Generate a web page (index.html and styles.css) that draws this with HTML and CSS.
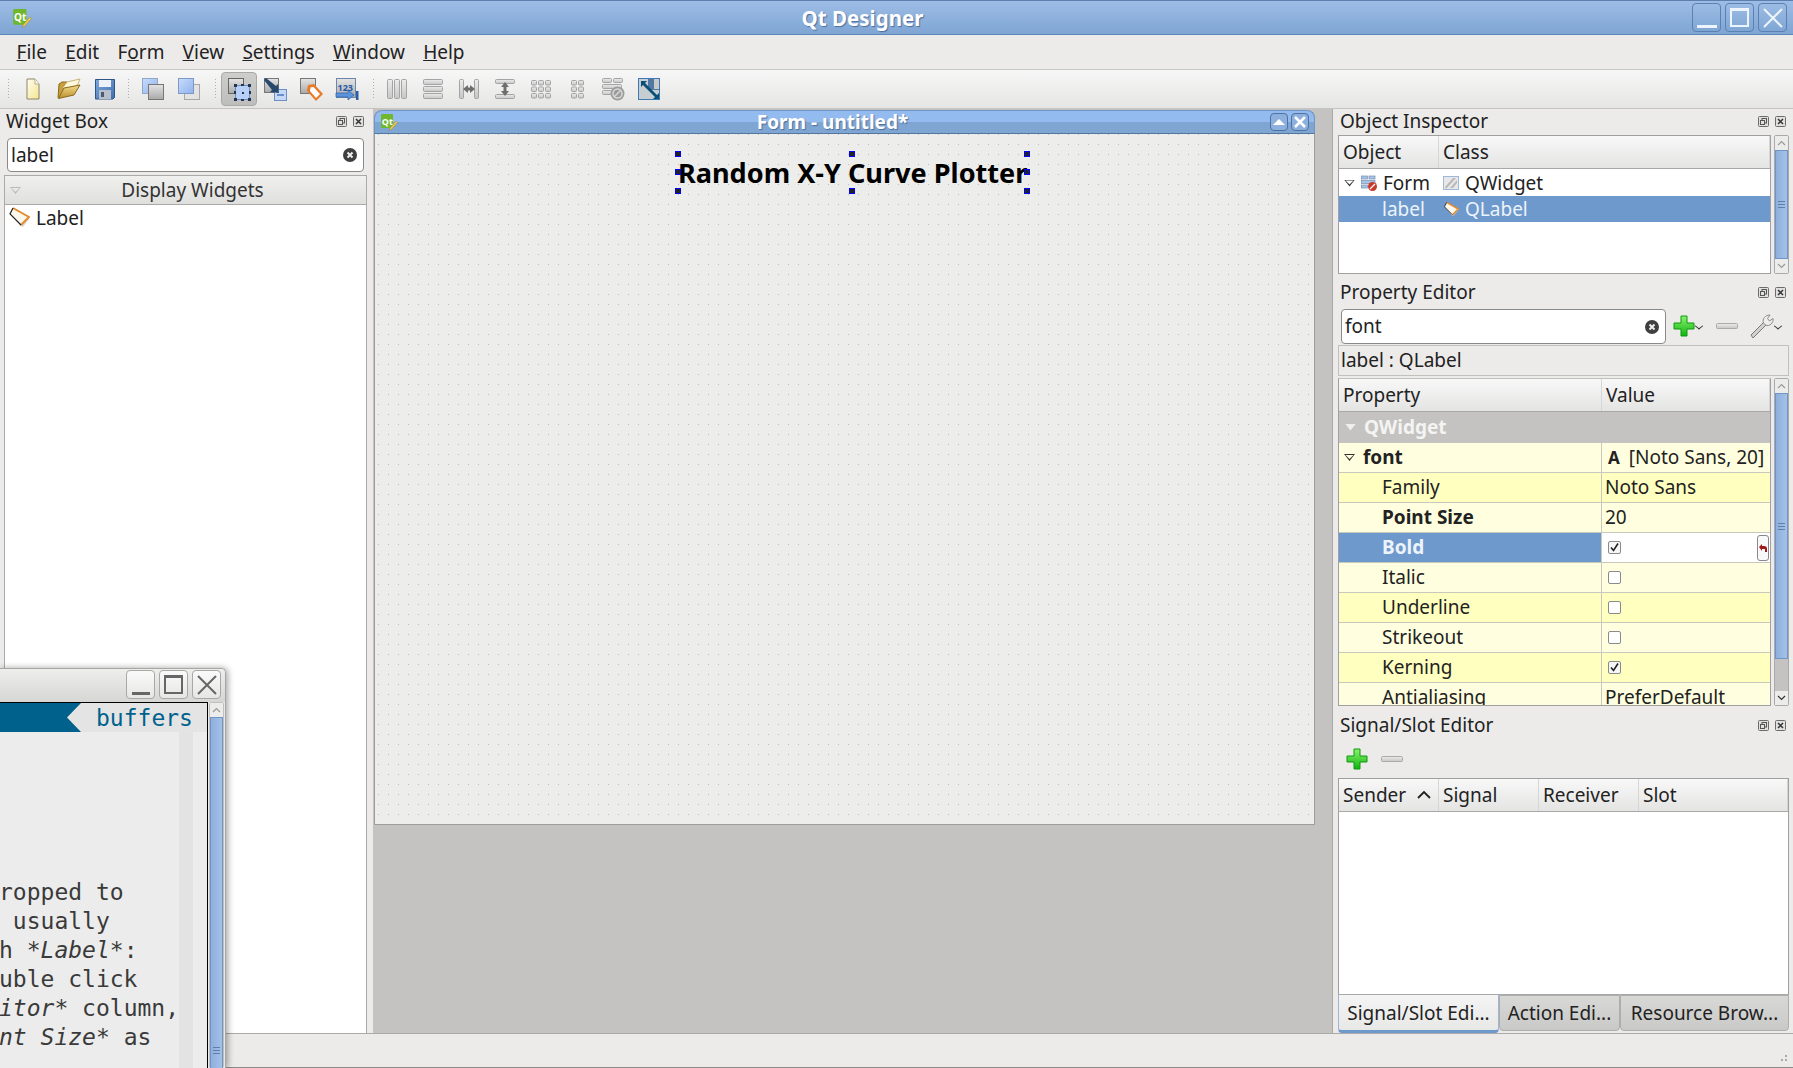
FILE: index.html
```html
<!DOCTYPE html>
<html lang="en">
<head>
<meta charset="UTF-8">
<title>Qt Designer</title>
<link rel="stylesheet" href="styles.css">
</head>
<body>

<!-- shared icons -->
<svg class="icon-defs" width="0" height="0">
  <defs>
    <linearGradient id="gGrey" x1="0" y1="0" x2="0" y2="1"><stop offset="0" stop-color="#e4e4e4"/><stop offset="1" stop-color="#a9a9a9"/></linearGradient>
    <linearGradient id="gBlue" x1="0" y1="0" x2="1" y2="1"><stop offset="0" stop-color="#c9dcfb"/><stop offset="1" stop-color="#8fb2ee"/></linearGradient>
    <linearGradient id="gBar" x1="0" y1="0" x2="0" y2="1"><stop offset="0" stop-color="#ececec"/><stop offset="1" stop-color="#c6c6c6"/></linearGradient>
    <linearGradient id="gFolder" x1="0" y1="0" x2="0" y2="1"><stop offset="0" stop-color="#f3dc8c"/><stop offset="1" stop-color="#bd8f2c"/></linearGradient>
    <linearGradient id="gPage" x1="0" y1="0" x2="1" y2="1"><stop offset="0" stop-color="#fffdf0"/><stop offset="1" stop-color="#f4e58e"/></linearGradient>
    <linearGradient id="gGreen" x1="0" y1="0" x2="0" y2="1"><stop offset="0" stop-color="#8af26e"/><stop offset="1" stop-color="#0fb50f"/></linearGradient>
    <linearGradient id="gFloppy" x1="0" y1="0" x2="1" y2="1"><stop offset="0" stop-color="#7ea8dc"/><stop offset="1" stop-color="#3f6fae"/></linearGradient>

    <symbol id="i-qt" viewBox="0 0 18 18">
      <rect x="1" y="1" width="12" height="14" rx="1" fill="#6fb82e"/>
      <text x="1.800" y="12" font-family="Noto Sans" font-weight="700" font-size="9" fill="#fff">Qt</text>
      <path d="M10 15l6-7 1.500 1.500-6 7-2.500 .8z" fill="#ecc94a" stroke="#8a7a40" stroke-width=".4"/>
    </symbol>
    <symbol id="i-new" viewBox="0 0 24 24">
      <path d="M6 2h8l4 5v15H6z" fill="url(#gPage)" stroke="#8d8668"/>
      <path d="M14 2v5h4" fill="#fff" stroke="#b5ad88"/>
    </symbol>
    <symbol id="i-open" viewBox="0 0 24 24">
      <path d="M1 21L2 7l3-2h5l2 2h6v4" fill="#c99f3d" stroke="#8a6a20"/>
      <path d="M5 12l5-7 13-3-3 7z" fill="#fff8d8" stroke="#b09a58" stroke-width=".7"/>
      <path d="M1.500 21.500L7 11l16-3-6 10z" fill="url(#gFolder)" stroke="#8a6a20"/>
    </symbol>
    <symbol id="i-save" viewBox="0 0 24 24">
      <path d="M2.500 2.500h19v18l-1.500 1.500h-17.500z" fill="url(#gFloppy)" stroke="#2f5488"/>
      <rect x="6" y="3" width="12" height="7" fill="#eef2f8"/>
      <rect x="6" y="13" width="12" height="9" fill="#b6bfcb"/>
      <rect x="8" y="15" width="3" height="5" fill="#4b5a6e"/>
    </symbol>
    <symbol id="i-front" viewBox="0 0 24 24">
      <rect x="1.500" y="1.500" width="15" height="15" fill="url(#gBlue)" stroke="#8fa8c8"/>
      <rect x="7.500" y="7.500" width="15" height="15" fill="url(#gGrey)" stroke="#777"/>
    </symbol>
    <symbol id="i-back" viewBox="0 0 24 24">
      <rect x="7.500" y="7.500" width="15" height="15" fill="#e3e3e3" stroke="#a8a8a8"/>
      <rect x="1.500" y="1.500" width="15" height="15" fill="url(#gBlue)" stroke="#7c9ac4"/>
    </symbol>
    <symbol id="i-widgets" viewBox="0 0 26 26">
      <rect x="2.500" y="2.500" width="15" height="15" fill="url(#gGrey)" stroke="#666"/>
      <rect x="9.500" y="9.500" width="14" height="14" fill="#b8d0f8" stroke="#6b8fc4"/>
      <path d="M8 8h3v3H8zM22 8h3v3h-3zM8 22h3v3H8zM22 22h3v3h-3zM15 8h3v2h-3zM16 16h2v2h-2zM23 15h2v3h-2zM8 15h2v3H8zM15 23h3v2h-3z" fill="#24364f"/>
    </symbol>
    <symbol id="i-signals" viewBox="0 0 24 24">
      <rect x="1.500" y="1.500" width="14" height="14" fill="url(#gGrey)" stroke="#777"/>
      <rect x="11.500" y="12.500" width="12" height="11" fill="#c5d8f8" stroke="#6b8fc4"/>
      <rect x="14" y="17" width="7" height="2" fill="#6b8fc4"/>
      <path d="M1 3l2-2 10 8 2-2 1 9-9-1 2-2z" fill="#28486e"/>
    </symbol>
    <symbol id="i-tagsq" viewBox="0 0 24 24">
      <rect x="1.500" y="1.500" width="15" height="15" fill="url(#gGrey)" stroke="#777"/>
      <path d="M9 8l6-1 9 10-7 7-9-10z" fill="#e87a28"/>
      <path d="M11.500 10.500l3-.5 6.500 7-4 4-6-7z" fill="#fff"/>
    </symbol>
    <symbol id="i-taborder" viewBox="0 0 24 24">
      <rect x="1.500" y="1.500" width="19" height="19" fill="url(#gGrey)" stroke="#6d87aa"/>
      <text x="2.500" y="14" font-family="Noto Sans" font-size="9" font-weight="700" fill="#2456a8">123</text>
      <path d="M1 16h12v-3l6 5-6 5v-3H1z" fill="#5b94dc" stroke="#2c5fa8" stroke-width=".7"/>
      <rect x="21" y="14" width="2.500" height="9" fill="#2c5fa8"/>
    </symbol>
    <symbol id="i-hbox" viewBox="0 0 24 24">
      <g fill="url(#gBar)" stroke="#a4a4a4"><rect x="2.500" y="2.500" width="5" height="19" rx="1"/><rect x="9.500" y="2.500" width="5" height="19" rx="1"/><rect x="16.500" y="2.500" width="5" height="19" rx="1"/></g>
    </symbol>
    <symbol id="i-vbox" viewBox="0 0 24 24">
      <g fill="url(#gBar)" stroke="#a4a4a4"><rect x="2.500" y="2.500" width="19" height="5" rx="1"/><rect x="2.500" y="9.500" width="19" height="5" rx="1"/><rect x="2.500" y="16.500" width="19" height="5" rx="1"/></g>
    </symbol>
    <symbol id="i-hsplit" viewBox="0 0 24 24">
      <g fill="url(#gBar)" stroke="#a4a4a4"><rect x="2.500" y="2.500" width="4" height="19" rx="1"/><rect x="17.500" y="2.500" width="4" height="19" rx="1"/></g>
      <path d="M6 12l5-4v2.500h2V8l5 4-5 4v-2.500h-2V16z" fill="#6e6e6e"/>
    </symbol>
    <symbol id="i-vsplit" viewBox="0 0 24 24">
      <g fill="url(#gBar)" stroke="#a4a4a4"><rect x="2.500" y="2.500" width="19" height="4" rx="1"/><rect x="2.500" y="17.500" width="19" height="4" rx="1"/></g>
      <path d="M12 5l4 5h-2.500v4H16l-4 5-4-5h2.500v-4H8z" fill="#6e6e6e"/>
    </symbol>
    <symbol id="i-grid" viewBox="0 0 24 24">
      <g fill="url(#gBar)" stroke="#a4a4a4">
        <rect x="2.500" y="3.500" width="5" height="4.500" rx="1"/><rect x="9.500" y="3.500" width="5" height="4.500" rx="1"/><rect x="16.500" y="3.500" width="5" height="4.500" rx="1"/>
        <rect x="2.500" y="10" width="5" height="4.500" rx="1"/><rect x="9.500" y="10" width="5" height="4.500" rx="1"/><rect x="16.500" y="10" width="5" height="4.500" rx="1"/>
        <rect x="2.500" y="16.500" width="5" height="4.500" rx="1"/><rect x="9.500" y="16.500" width="5" height="4.500" rx="1"/><rect x="16.500" y="16.500" width="5" height="4.500" rx="1"/>
      </g>
    </symbol>
    <symbol id="i-formgrid" viewBox="0 0 24 24">
      <g fill="url(#gBar)" stroke="#a4a4a4">
        <rect x="6.500" y="3.500" width="5" height="4.500" rx="1"/><rect x="13.500" y="3.500" width="5" height="4.500" rx="1"/>
        <rect x="6.500" y="10" width="5" height="4.500" rx="1"/><rect x="13.500" y="10" width="5" height="4.500" rx="1"/>
        <rect x="6.500" y="16.500" width="5" height="4.500" rx="1"/><rect x="13.500" y="16.500" width="5" height="4.500" rx="1"/>
      </g>
    </symbol>
    <symbol id="i-break" viewBox="0 0 24 24">
      <g fill="url(#gBar)" stroke="#a4a4a4">
        <rect x="1.500" y="1.500" width="9" height="4" rx="1"/><rect x="12.500" y="1.500" width="9" height="4" rx="1"/>
        <rect x="1.500" y="7.500" width="19" height="4" rx="1"/><rect x="1.500" y="13.500" width="9" height="4" rx="1"/>
      </g>
      <circle cx="16.500" cy="16.500" r="7" fill="#9c9c9c"/>
      <circle cx="16.500" cy="16.500" r="4.500" fill="none" stroke="#d8d8d8" stroke-width="1.500"/>
      <path d="M13.500 19.500l6-6" stroke="#d8d8d8" stroke-width="1.500"/>
    </symbol>
    <symbol id="i-adjust" viewBox="0 0 24 24">
      <rect x="1.500" y="1.500" width="21" height="21" fill="#c6ced2" stroke="#3e78b6"/>
      <path d="M2 2h15v9h6v2H11V2z" fill="#3d6a9e" opacity=".85"/>
      <rect x="17" y="2" width="5" height="10" fill="#c9c9c9"/>
      <path d="M4 4h6L8 6l12 12 2-2v6h-6l2-2L6 8 4 10z" fill="#0a4f78"/>
    </symbol>
    <symbol id="i-tag" viewBox="0 0 22 22">
      <path d="M4 6l8 14 3 1 6-8" fill="#bdbdbd" opacity=".6"/>
      <path d="M5 2l17 9-9 9L2 8z" fill="#fbf7ec"/>
      <path d="M5 2l16 9-8 8" fill="none" stroke="#e48b2c" stroke-width="2"/>
      <path d="M13 19L2 8l3-6" fill="none" stroke="#222" stroke-width="1.200"/>
    </symbol>
    <symbol id="i-clear" viewBox="0 0 14 14">
      <circle cx="7" cy="7" r="7" fill="#3f3f3f"/>
      <path d="M4.500 4.500l5 5M9.500 4.500l-5 5" stroke="#eee" stroke-width="2"/>
    </symbol>
    <symbol id="i-float" viewBox="0 0 11 11">
      <rect x=".5" y=".5" width="10" height="10" rx="1" fill="#e0e0e0" stroke="#6c6c6c"/>
      <rect x="4" y="2.500" width="4.500" height="4.500" fill="none" stroke="#555"/>
      <rect x="2.500" y="4.500" width="4" height="4" fill="#e0e0e0" stroke="#555"/>
    </symbol>
    <symbol id="i-close" viewBox="0 0 11 11">
      <rect x=".5" y=".5" width="10" height="10" rx="1" fill="#e0e0e0" stroke="#6c6c6c"/>
      <path d="M3 3l5 5M8 3L3 8" stroke="#333" stroke-width="1.500"/>
    </symbol>
    <symbol id="i-plus" viewBox="0 0 22 22">
      <path d="M8 1h6v7h7v6h-7v7H8v-7H1V8h7z" fill="url(#gGreen)" stroke="#0c9a0c"/>
    </symbol>
    <symbol id="i-minus" viewBox="0 0 22 6">
      <rect x=".5" y=".5" width="21" height="5" rx="1" fill="url(#gBar)" stroke="#aaa"/>
    </symbol>
    <symbol id="i-wrench" viewBox="0 0 24 24">
      <path d="M1 21L14 8l2.500 2.500L3 24z" fill="#d0d0d0" stroke="#7a7a7a"/>
      <path d="M13.500 9C12 5 15 1 20 1l-2.500 3.500 2 2.500L23 4.500C24 9 19 13 15.500 11z" fill="#ededed" stroke="#8a8a8a"/>
    </symbol>
    <symbol id="i-formtree" viewBox="0 0 16 16">
      <g fill="#a9c4e4" stroke="#6f8db3" stroke-width=".7"><rect x=".5" y="1" width="6" height="3"/><rect x="8" y="1" width="6" height="3"/><rect x=".5" y="5.500" width="13.500" height="3"/><rect x=".5" y="10" width="6" height="3"/></g>
      <circle cx="11.500" cy="11.500" r="4.500" fill="#c8392e"/>
      <path d="M9 14l5-5" stroke="#fff" stroke-width="1.200"/>
    </symbol>
    <symbol id="i-qwidget" viewBox="0 0 16 14">
      <rect x=".5" y=".5" width="15" height="13" fill="#e8e8e8" stroke="#9db8da"/>
      <path d="M2 11l8-9h3L3 13M7 12l7-8v3l-4 5" fill="#b9b9b9"/>
    </symbol>
    <symbol id="i-check" viewBox="0 0 13 13">
      <rect x=".5" y=".5" width="12" height="12" rx="1.500" fill="#f6f6f6" stroke="#8a8a8a"/>
      <path d="M3 6.500l2.500 3L10 2.500" fill="none" stroke="#222" stroke-width="1.600"/>
    </symbol>
    <symbol id="i-box" viewBox="0 0 13 13">
      <rect x=".5" y=".5" width="12" height="12" rx="1.500" fill="#fff" stroke="#8a8a8a"/>
    </symbol>
  </defs>
</svg>

<div class="app">
  <header class="titlebar">
    <svg class="title-logo"><use href="#i-qt"/></svg>
    <span class="title-text">Qt Designer</span>
    <div class="win-btns">
      <span class="win-btn"><i class="glyph-min"></i></span>
      <span class="win-btn"><i class="glyph-max"></i></span>
      <span class="win-btn"><svg width="24" height="24"><path d="M3 3l18 18M21 3L3 21"/></svg></span>
    </div>
  </header>

  <nav class="menubar">
    <span class="menu-item"><u>F</u>ile</span>
    <span class="menu-item"><u>E</u>dit</span>
    <span class="menu-item">F<u>o</u>rm</span>
    <span class="menu-item"><u>V</u>iew</span>
    <span class="menu-item"><u>S</u>ettings</span>
    <span class="menu-item"><u>W</u>indow</span>
    <span class="menu-item"><u>H</u>elp</span>
  </nav>

  <div class="toolbar">
    <span class="tb-handle"></span>
    <span class="tb-btn"><svg><use href="#i-new"/></svg></span>
    <span class="tb-btn"><svg><use href="#i-open"/></svg></span>
    <span class="tb-btn"><svg><use href="#i-save"/></svg></span>
    <span class="tb-sep"></span>
    <span class="tb-btn"><svg><use href="#i-front"/></svg></span>
    <span class="tb-btn"><svg><use href="#i-back"/></svg></span>
    <span class="tb-sep wide"></span>
    <span class="tb-btn active"><svg><use href="#i-widgets"/></svg></span>
    <span class="tb-btn"><svg><use href="#i-signals"/></svg></span>
    <span class="tb-btn"><svg><use href="#i-tagsq"/></svg></span>
    <span class="tb-btn"><svg><use href="#i-taborder"/></svg></span>
    <span class="tb-sep wide"></span>
    <span class="tb-btn"><svg><use href="#i-hbox"/></svg></span>
    <span class="tb-btn"><svg><use href="#i-vbox"/></svg></span>
    <span class="tb-btn"><svg><use href="#i-hsplit"/></svg></span>
    <span class="tb-btn"><svg><use href="#i-vsplit"/></svg></span>
    <span class="tb-btn"><svg><use href="#i-grid"/></svg></span>
    <span class="tb-btn"><svg><use href="#i-formgrid"/></svg></span>
    <span class="tb-btn"><svg><use href="#i-break"/></svg></span>
    <span class="tb-btn"><svg><use href="#i-adjust"/></svg></span>
  </div>

  <main class="workspace">
    <aside class="left-dock">
      <div class="dock-title">
        <span>Widget Box</span>
        <span class="dock-btns"><svg><use href="#i-float"/></svg><svg><use href="#i-close"/></svg></span>
      </div>
      <div class="filter filter-left">
        <span>label</span>
        <svg class="clear"><use href="#i-clear"/></svg>
      </div>
      <div class="category"><i class="tri tri-light"></i><span>Display Widgets</span></div>
      <div class="box-list">
        <div class="box-item"><svg><use href="#i-tag"/></svg><span>Label</span></div>
      </div>
    </aside>

    <section class="mdi">
      <div class="form-win">
        <div class="form-title">
          <svg class="form-logo"><use href="#i-qt"/></svg>
          <span class="form-name">Form - untitled*</span>
          <span class="form-btn"><svg width="12" height="8"><path d="M0 7l6-6 6 6z" fill="#fff"/></svg></span>
          <span class="form-btn"><svg width="12" height="12"><path d="M1 1l10 10M11 1L1 11" stroke="#fff" stroke-width="2.500"/></svg></span>
        </div>
        <div class="form-body">
          <div class="form-label">Random X-Y Curve Plotter
            <i class="handle h-tl"></i><i class="handle h-tc"></i><i class="handle h-tr"></i>
            <i class="handle h-ml"></i><i class="handle h-mr"></i>
            <i class="handle h-bl"></i><i class="handle h-bc"></i><i class="handle h-br"></i>
          </div>
        </div>
      </div>
    </section>

    <aside class="right-dock">
      <div class="dock-title">
        <span>Object Inspector</span>
        <span class="dock-btns"><svg><use href="#i-float"/></svg><svg><use href="#i-close"/></svg></span>
      </div>
      <div class="inspector-row">
        <div class="tree">
          <div class="head tree-cols">
            <span class="head-cell">Object</span>
            <span class="head-cell">Class</span>
          </div>
          <div class="tree-cols tree-row">
            <span class="cell-obj"><i class="tri"></i><svg class="ico16"><use href="#i-formtree"/></svg>Form</span>
            <span class="cell-cls"><svg class="ico16"><use href="#i-qwidget"/></svg>QWidget</span>
          </div>
          <div class="tree-cols tree-row selected">
            <span class="cell-obj indent">label</span>
            <span class="cell-cls"><svg class="ico16"><use href="#i-tag"/></svg>QLabel</span>
          </div>
        </div>
        <div class="scrollbar sb-obj">
          <span class="sb-arrow"><svg width="9" height="6"><path d="M1 5l3.500-3.500L8 5"/></svg></span>
          <span class="sb-thumb"><i></i></span>
          <span class="sb-arrow"><svg width="9" height="6"><path d="M1 1l3.500 3.500L8 1"/></svg></span>
        </div>
      </div>

      <div class="dock-title title-gap">
        <span>Property Editor</span>
        <span class="dock-btns"><svg><use href="#i-float"/></svg><svg><use href="#i-close"/></svg></span>
      </div>
      <div class="prop-tools">
        <div class="filter filter-prop">
          <span>font</span>
          <svg class="clear"><use href="#i-clear"/></svg>
        </div>
        <svg class="tool-plus"><use href="#i-plus"/></svg><b class="chev"></b>
        <svg class="tool-minus"><use href="#i-minus"/></svg>
        <svg class="tool-wrench"><use href="#i-wrench"/></svg><b class="chev"></b>
      </div>
      <div class="class-name">label : QLabel</div>
      <div class="inspector-row prop-row">
        <div class="props">
          <div class="head prop-cols">
            <span class="head-cell">Property</span>
            <span class="head-cell">Value</span>
          </div>
          <div class="prop-group"><i class="tri tri-white"></i>QWidget</div>
          <div class="prop prop-cols light"><span class="pname strong-top"><i class="tri"></i><b>font</b></span><span class="pval"><b class="font-a">A</b>[Noto Sans, 20]</span></div>
          <div class="prop prop-cols dark"><span class="pname">Family</span><span class="pval">Noto Sans</span></div>
          <div class="prop prop-cols light"><span class="pname"><b>Point Size</b></span><span class="pval">20</span></div>
          <div class="prop prop-cols current"><span class="pname"><b>Bold</b></span><span class="pval editor"><svg class="ico13"><use href="#i-check"/></svg><span class="reset"><svg width="8" height="8"><path d="M0 3l3-3v2h2c2 0 3 1 3 3v3H6V5H3v2z" fill="#a01818"/></svg></span></span></div>
          <div class="prop prop-cols light"><span class="pname">Italic</span><span class="pval"><svg class="ico13"><use href="#i-box"/></svg></span></div>
          <div class="prop prop-cols dark"><span class="pname">Underline</span><span class="pval"><svg class="ico13"><use href="#i-box"/></svg></span></div>
          <div class="prop prop-cols light"><span class="pname">Strikeout</span><span class="pval"><svg class="ico13"><use href="#i-box"/></svg></span></div>
          <div class="prop prop-cols dark"><span class="pname">Kerning</span><span class="pval"><svg class="ico13"><use href="#i-check"/></svg></span></div>
          <div class="prop prop-cols light"><span class="pname">Antialiasing</span><span class="pval">PreferDefault</span></div>
        </div>
        <div class="scrollbar sb-prop">
          <span class="sb-arrow"><svg width="9" height="6"><path d="M1 5l3.500-3.500L8 5"/></svg></span>
          <span class="sb-thumb"><i></i></span>
          <span class="sb-track"></span>
          <span class="sb-arrow sb-dark"><svg width="9" height="6"><path d="M1 1l3.500 3.500L8 1"/></svg></span>
        </div>
      </div>

      <div class="dock-title signal-title">
        <span>Signal/Slot Editor</span>
        <span class="dock-btns"><svg><use href="#i-float"/></svg><svg><use href="#i-close"/></svg></span>
      </div>
      <div class="signal-tools">
        <svg class="tool-plus"><use href="#i-plus"/></svg>
        <svg class="tool-minus"><use href="#i-minus"/></svg>
      </div>
      <div class="signals">
        <div class="head signal-cols">
          <span class="head-cell sender">Sender<svg width="16" height="10"><path d="M2 8l6-6 6 6" fill="none" stroke="#222" stroke-width="1.800"/></svg></span>
          <span class="head-cell">Signal</span>
          <span class="head-cell">Receiver</span>
          <span class="head-cell">Slot</span>
        </div>
      </div>
      <div class="tabs">
        <span class="tab active">Signal/Slot Edi...</span>
        <span class="tab tab-action">Action Edi...</span>
        <span class="tab tab-res">Resource Brow...</span>
      </div>
    </aside>
  </main>

  <footer class="statusbar"><i class="grip"></i></footer>
</div>

<!-- terminal window lying over the designer -->
<div class="term">
  <div class="term-title">
    <span class="term-btn"><i class="glyph-min dark"></i></span>
    <span class="term-btn"><i class="glyph-max dark"></i></span>
    <span class="term-btn"><svg width="22" height="22"><path d="M2 2l18 18M20 2L2 20"/></svg></span>
  </div>
  <div class="term-body">
    <div class="term-main">
      <div class="term-tabline"><span class="term-tab"></span><span class="term-buffers">buffers</span></div>
      <div class="term-text">
        <div class="term-line">ropped to</div>
        <div class="term-line"> usually</div>
        <div class="term-line">h <em>*Label*</em>:</div>
        <div class="term-line">uble click</div>
        <div class="term-line"><em>itor*</em> column,</div>
        <div class="term-line"><em>nt Size*</em> as</div>
      </div>
    </div>
    <div class="scrollbar sb-term">
      <span class="sb-arrow"><svg width="9" height="6"><path d="M1 5l3.500-3.500L8 5"/></svg></span>
      <span class="sb-thumb"><i></i></span>
    </div>
  </div>
</div>

</body>
</html>
```

FILE: styles.css
```css
* {
    box-sizing: border-box;
}
html, body {
    margin: 0;
    height: 100%;
    overflow: hidden;
}
body {
    position: relative;
    background-color: #ecebea;
    font-family: "Noto Sans", sans-serif;
    font-size: 19px;
    color: #222;
}
.icon-defs {
    position: absolute;
}
.app {
    display: flex;
    flex-direction: column;
    height: 1068px;
}

/* title bar */
.titlebar {
    position: relative;
    flex: 0 0 35px;
    display: flex;
    align-items: center;
    justify-content: center;
    padding-right: 68px;
    background: linear-gradient(#9dbde6, #7fa5d3);
    border-top: 1px solid #5d7fae;
    border-bottom: 1px solid #5f86b8;
}
.title-logo {
    position: absolute;
    left: 12px;
    top: 7px;
    width: 20px;
    height: 20px;
}
.title-text {
    font-weight: 700;
    font-size: 20.5px;
    color: #fff;
    text-shadow: 1px 1px 1px #4d6f9c;
}
.win-btns {
    position: absolute;
    right: 6px;
    top: 2px;
    display: flex;
    gap: 4px;
}
.win-btn {
    width: 29px;
    height: 29px;
    display: flex;
    align-items: center;
    justify-content: center;
    border: 1px solid #5b80b2;
    border-radius: 4px;
    background: linear-gradient(#9cbce4, #7fa6d4);
}
.win-btn svg path {
    stroke: #eef4fb;
    stroke-width: 2;
}
.glyph-min {
    display: block;
    width: 20px;
    height: 3px;
    margin-top: 18px;
    background-color: #eef4fb;
}
.glyph-max {
    display: block;
    width: 19px;
    height: 19px;
    border: 2px solid #eef4fb;
    border-top-width: 3px;
}
.glyph-min.dark {
    width: 18px;
    background-color: #666;
}
.glyph-max.dark {
    border-color: #666;
}

/* menu */
.menubar {
    flex: 0 0 34px;
    display: flex;
    align-items: center;
    padding: 0 0 1px 7.5px;
    background-color: #ecebea;
}
.menu-item {
    padding: 0 9.1px;
    color: #222;
}

/* toolbar */
.toolbar {
    flex: 0 0 40px;
    display: flex;
    align-items: center;
    background: linear-gradient(#f7f7f7, #e5e5e4);
    border-top: 1px solid #c8c8c6;
    border-bottom: 1px solid #c4c4c2;
}
.tb-handle {
    width: 15px;
    height: 20px;
    background: radial-gradient(circle at .5px .5px, #b0b0ae .5px, transparent .6px) 8px 0 / 2px 3px repeat-y;
}
.tb-btn {
    width: 36px;
    height: 34px;
    display: flex;
    align-items: center;
    justify-content: center;
    border: 1px solid transparent;
    border-radius: 4px;
}
.tb-btn svg {
    width: 24px;
    height: 24px;
}
.tb-btn.active {
    background: linear-gradient(#cdcdcb, #bdbdbb);
    border-color: #a9a9a7;
}
.tb-btn.active svg {
    width: 26px;
    height: 26px;
}
.tb-sep {
    width: 12px;
    height: 20px;
    background: radial-gradient(circle at .5px .5px, #b0b0ae .5px, transparent .6px) 5px 0 / 2px 3px repeat-y;
}
.tb-sep.wide {
    width: 14px;
    background-position: 8px 0;
}

/* docks */
.workspace {
    flex: 1;
    display: flex;
    min-height: 0;
}
.left-dock {
    flex: 0 0 373px;
    display: flex;
    flex-direction: column;
    padding: 0 6px 0 4px;
}
.dock-title {
    flex: 0 0 26px;
    display: flex;
    align-items: center;
    justify-content: space-between;
    padding: 0 0 2px 2px;
    line-height: 24px;
    color: #222;
}
.dock-btns {
    display: flex;
    gap: 6px;
    padding-right: 3px;
}
.dock-btns svg {
    width: 11px;
    height: 11px;
}
.filter {
    display: flex;
    align-items: center;
    justify-content: space-between;
    background-color: #fff;
    border: 1px solid #8a8a8a;
    border-radius: 4px;
    padding: 0 6px 1px 3px;
    color: #222;
}
.clear {
    width: 14px;
    height: 14px;
    margin-top: 1px;
}
.filter-left {
    flex: 0 0 34px;
    margin: 3px 3px 3px 3px;
}
.category {
    position: relative;
    flex: 0 0 30px;
    display: flex;
    align-items: center;
    justify-content: center;
    background: linear-gradient(#f0f0ef, #dfdfde);
    border: 1px solid #aaa;
    padding-left: 14px;
    color: #333;
}
.category .tri {
    position: absolute;
    left: 5px;
    top: 11px;
}
.tri {
    display: inline-block;
    flex: none;
    width: 11px;
    height: 7px;
    background-color: #333;
    clip-path: polygon(0 0, 100% 0, 50% 100%, 0 0, 1.5px 1px, 50% 5px, 9.5px 1px, 1.5px 1px);
}
.tri-light {
    background-color: #bbb;
}
.tri-white {
    background-color: #eee;
    clip-path: polygon(0 0, 100% 0, 50% 100%);
}
.box-list {
    flex: 1;
    background-color: #fff;
    border-left: 1px solid #aaa;
    border-right: 1px solid #aaa;
}
.box-item {
    display: flex;
    align-items: center;
    gap: 6px;
    height: 25px;
    padding: 0 0 0 3px;
}
.box-item svg {
    width: 22px;
    height: 22px;
    margin-top: -2px;
}

/* form in the middle */
.mdi {
    flex: 0 0 960px;
    padding: 1px 17px 0 1px;
    background-color: #c4c3c1;
    border-right: 1px solid #a8a8a6;
}
.form-win {
    height: 715px;
    display: flex;
    flex-direction: column;
    border: 1px solid #9d9d9b;
    border-top: none;
    border-radius: 8px 8px 0 0;
    background-color: #ededec;
}
.form-title {
    flex: 0 0 24px;
    display: flex;
    align-items: center;
    padding: 0 5px 0 5px;
    border-radius: 8px 8px 0 0;
    border: 1px solid #6f95c6;
    border-bottom-color: #54769f;
    margin: 0 -1px;
    background: linear-gradient(#94bbef 50%, #7fa5d3 50%);
}
.form-logo {
    flex: none;
    width: 18px;
    height: 18px;
}
.form-name {
    flex: 1;
    text-align: center;
    font-weight: 700;
    font-size: 19px;
    line-height: 22px;
    color: #fff;
    text-shadow: 1px 1px 1px #4d6f9c;
}
.form-btn {
    flex: none;
    width: 18px;
    height: 18px;
    margin-left: 3px;
    display: flex;
    align-items: center;
    justify-content: center;
    border: 1px solid #4f72a0;
    border-radius: 4px;
    background-color: #8db0de;
}
.form-body {
    position: relative;
    flex: 1;
    background-color: #ededec;
    background-image: radial-gradient(circle at .5px .5px, #bdbdbb .5px, transparent .6px);
    background-size: 10px 10px;
    background-position: 3px 0;
}
.form-label {
    position: absolute;
    left: 303px;
    top: 20px;
    width: 349px;
    height: 37px;
    line-height: 37px;
    font-size: 27.1px;
    font-weight: 700;
    white-space: nowrap;
    color: #000;
}
.handle {
    position: absolute;
    width: 6px;
    height: 6px;
    background-color: #222;
    border: 1px solid #0000ff;
}
.h-tl { left: -3px; top: -3px; }
.h-tc { left: 171px; top: -3px; }
.h-tr { right: -3px; top: -3px; }
.h-ml { left: -3px; top: 15px; }
.h-mr { right: -3px; top: 15px; }
.h-bl { left: -3px; bottom: -3px; }
.h-bc { left: 171px; bottom: -3px; }
.h-br { right: -3px; bottom: -3px; }

/* right side */
.right-dock {
    flex: 0 0 460px;
    display: flex;
    flex-direction: column;
    padding: 0 4px 0 5px;
}
.inspector-row {
    flex: 0 0 139px;
    min-height: 0;
    display: flex;
    gap: 3px;
}
.tree {
    width: 433px;
    background-color: #fff;
    border: 1px solid #a0a0a0;
}
.head {
    height: 33px;
    background: linear-gradient(#f8f8f8, #e4e4e3);
    border-bottom: 1px solid #a8a8a8;
    color: #222;
}
.head-cell {
    display: flex;
    align-items: center;
    height: 100%;
    padding-left: 4px;
    border-right: 1px solid #d6d6d6;
}
.tree-cols {
    display: grid;
    grid-template-columns: 100px 1fr;
}
.tree-row {
    height: 26px;
    align-items: center;
    line-height: 26px;
    position: relative;
    top: 1px;
}
.cell-obj {
    display: flex;
    align-items: center;
    padding-left: 5px;
    gap: 6px;
}
.cell-obj.indent {
    padding-left: 43px;
}
.cell-cls {
    display: flex;
    align-items: center;
    padding-left: 4px;
    gap: 6px;
}
.ico16 {
    width: 16px;
    height: 16px;
    flex: none;
}
.ico13 {
    width: 13px;
    height: 13px;
    display: block;
}
.selected {
    background-color: #6e99cc;
    color: #edf3fa;
}
.scrollbar {
    width: 15px;
    display: flex;
    flex-direction: column;
    background-color: #c4c3c1;
    border: 1px solid #aaa;
    border-radius: 2px;
}
.sb-arrow {
    flex: 0 0 14px;
    display: flex;
    align-items: center;
    justify-content: center;
    background-color: #ececeb;
}
.sb-arrow svg path {
    fill: none;
    stroke: #999;
    stroke-width: 1.200;
}
.sb-dark svg path {
    stroke: #333;
}
.sb-thumb {
    flex: 1;
    display: flex;
    align-items: center;
    justify-content: center;
    background: linear-gradient(90deg, #8eb0de, #a5c1e6);
    border: 1px solid #6f95c6;
}
.sb-thumb i {
    width: 7px;
    height: 7px;
    border-top: 1px solid #5f7fa8;
    border-bottom: 1px solid #5f7fa8;
    background: linear-gradient(#5f7fa8, #5f7fa8) 0 2px / 100% 1px no-repeat;
}
.sb-track {
    flex: 0 0 32px;
}
.title-gap {
    flex: 0 0 35px;
    padding: 1px 0 0 2px;
}
.prop-tools {
    flex: 0 0 36px;
    display: flex;
    align-items: flex-start;
    padding-left: 3px;
}
.filter-prop {
    width: 325px;
    height: 35px;
}
.tool-plus {
    width: 22px;
    height: 22px;
    flex: none;
}
.prop-tools .tool-plus {
    margin: 6px 0 0 7px;
}
.tool-minus {
    width: 22px;
    height: 6px;
    flex: none;
}
.prop-tools .tool-minus {
    margin: 14px 0 0 14px;
}
.tool-wrench {
    width: 24px;
    height: 24px;
    flex: none;
    margin: 5px 0 0 12px;
}
.chev {
    flex: none;
    width: 6px;
    height: 6px;
    margin: 14px 0 0 1px;
    border-right: 1.500px solid #333;
    border-bottom: 1.500px solid #333;
    transform: scaleY(.8) rotate(45deg);
}
.class-name {
    flex: 0 0 31px;
    display: flex;
    align-items: center;
    padding: 0 0 1px 2px;
    border: 1px solid #c0c0be;
    margin-bottom: 2px;
}
.prop-row {
    flex: 0 0 328px;
}
.props {
    width: 433px;
    overflow: hidden;
    background-color: #ffffdf;
    border: 1px solid #a0a0a0;
    border-top-color: #c0c0be;
}
.prop-cols {
    display: grid;
    grid-template-columns: 263px 1fr;
}
.prop-group {
    display: flex;
    align-items: center;
    gap: 8px;
    height: 31px;
    padding: 0 0 1px 6px;
    background-color: #c4c3c1;
    font-weight: 700;
    color: #f4f4f2;
}
.prop {
    height: 30px;
    line-height: 29px;
    border-bottom: 1px solid #c8c8bc;
}
.prop.light {
    background-color: #ffffdf;
}
.prop.dark {
    background-color: #ffffc0;
}
.prop.current {
    background-color: #fff;
}
.pname {
    display: flex;
    align-items: center;
    padding-left: 43px;
    border-right: 1px solid #c8c8bc;
}
.pname.strong-top {
    padding-left: 5px;
    gap: 8px;
}
.current .pname {
    background-color: #6e99cc;
    color: #edf3fa;
}
.pval {
    display: flex;
    align-items: center;
    padding-left: 3px;
}
.pval svg.ico13 {
    margin-left: 3px;
}
.font-a {
    margin: 0 9px 0 3px;
    font-size: 17px;
}
.editor {
    justify-content: space-between;
    padding-right: 1px;
}
.reset {
    display: flex;
    align-items: center;
    justify-content: center;
    width: 12px;
    height: 26px;
    border: 1px solid #888;
    border-radius: 3px;
    background-color: #f8f8f8;
}
.signal-title {
    flex: 0 0 38px;
    padding: 2px 0 2px 2px;
}
.signal-tools {
    flex: 0 0 34px;
    display: flex;
    align-items: center;
    gap: 13px;
    padding: 0 0 5px 8px;
}
.signals {
    flex: 0 0 217px;
    background-color: #fff;
    border: 1px solid #a0a0a0;
}
.signal-cols {
    display: grid;
    grid-template-columns: 100px 100px 100px 1fr;
}
.sender {
    justify-content: space-between;
    padding-right: 6px;
}
.tabs {
    flex: 1;
    display: flex;
    border-top: 1px solid #a8a8a8;
    align-items: flex-start;
    margin-top: -1px;
}
.tab {
    height: 36px;
    display: flex;
    align-items: center;
    justify-content: center;
    background: linear-gradient(#d8d8d7, #c9c9c8);
    border: 1px solid #adadab;
    border-radius: 0 0 4px 4px;
    color: #222;
    white-space: nowrap;
}
.tab.active {
    width: 161px;
    height: 38px;
    background: linear-gradient(#f4f4f4, #e8e8e7);
    border-color: #9db6d6;
    border-top: none;
    border-bottom: 3px solid #6e99cc;
}
.tab-action {
    width: 121px;
}
.tab-res {
    width: 169px;
}

/* status */
.statusbar {
    position: relative;
    flex: 0 0 35px;
    background-color: #ecebea;
    border-top: 1px solid #aaa;
    border-bottom: 1px solid #8a8a8a;
}
.grip {
    position: absolute;
    right: 4px;
    bottom: 4px;
    width: 12px;
    height: 12px;
    background: radial-gradient(circle at 1px 1px, #aaa 0.8px, transparent 0.9px) 0 0 / 4px 4px;
    clip-path: polygon(100% 0, 100% 100%, 0 100%);
}

/* terminal window */
.term {
    position: absolute;
    left: 0;
    top: 668px;
    width: 226px;
    height: 400px;
    display: flex;
    flex-direction: column;
    overflow: hidden;
    background-color: #e9e9e8;
    border: 1px solid #a6a6a4;
    border-left: none;
    border-bottom: none;
    border-radius: 0 5px 0 0;
    box-shadow: 2px 0 6px rgba(0, 0, 0, .35);
}
.term-title {
    flex: 0 0 33px;
    display: flex;
    justify-content: flex-end;
    gap: 4px;
    padding: 1px 4px 0 0;
    background: linear-gradient(#eeeeed, #d6d6d5);
}
.term-btn {
    width: 29px;
    height: 29px;
    display: flex;
    align-items: center;
    justify-content: center;
    border: 1px solid #a8a8a6;
    border-radius: 4px;
    background: linear-gradient(#fafafa, #e6e6e5);
}
.term-btn svg path {
    stroke: #666;
    stroke-width: 2;
}
.term-body {
    flex: 1;
    display: flex;
    min-height: 0;
    padding-right: 3px;
}
.term-main {
    flex: 0 0 208px;
    display: flex;
    flex-direction: column;
    background-color: #ececec;
    border-top: 1px solid #000;
    border-right: 1px solid #000;
}
.term-tabline {
    flex: 0 0 29px;
    display: flex;
    align-items: center;
    background-color: #e4e4e4;
    font-family: "DejaVu Sans Mono", monospace;
    font-size: 23px;
    color: #00628c;
}
.term-tab {
    width: 81px;
    height: 100%;
    background-color: #00628c;
    clip-path: polygon(0 0, 100% 0, 67px 50%, 100% 100%, 0 100%);
}
.term-buffers {
    margin-left: 15px;
}
.term-text {
    flex: 1;
    background: linear-gradient(#e3e3e3, #e3e3e3) 179px 0 / 14px 100% no-repeat;
    padding-top: 146px;
}
.term-line {
    margin-left: -1px;
    white-space: pre;
    font-family: "DejaVu Sans Mono", monospace;
    font-size: 23px;
    line-height: 29px;
    color: #3a3a3a;
}
.sb-term {
    flex: none;
    margin-left: 1px;
    border: 1px solid #c0c0be;
}
.sb-term .sb-thumb {
    flex: 0 0 666px;
}
```
